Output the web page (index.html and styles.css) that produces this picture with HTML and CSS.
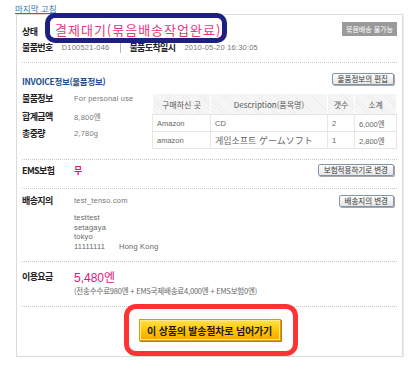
FILE: index.html
```html
<!DOCTYPE html>
<html lang="ko">
<head>
  <meta charset="UTF-8">
  <meta name="viewport" content="width=device-width, initial-scale=1.0">
  <title>물품 상세</title>
  <link rel="stylesheet" href="styles.css">
</head>
<body>
  <a class="edit-link" href="#">마지막 고침</a>
  <div class="panel">
    <div class="section status-section">
      <div class="status-row">
        <span class="label status-label">상태</span>
        <span class="status-text">결제대기(묶음배송작업완료)</span>
        <span class="badge">묶음배송 불가능</span>
      </div>
      <div class="meta-row">
        <span class="label">물품번호</span>
        <span class="value meta-value">D100521-046</span>
        <span class="sep"></span>
        <span class="label">물품도착일시</span>
        <span class="value meta-value">2010-05-20 16:30:05</span>
      </div>
    </div>

    <div class="section invoice-section">
      <div class="invoice-head">
        <span class="invoice-title">INVOICE정보(물품정보)</span>
        <button class="small-btn">물품정보의 편집</button>
      </div>
      <div class="invoice-body">
        <div class="info-list">
          <div class="info-row"><span class="label">물품정보</span><span class="value">For personal use</span></div>
          <div class="info-row"><span class="label">합계금액</span><span class="value">8,800엔</span></div>
          <div class="info-row"><span class="label">총중량</span><span class="value">2,780g</span></div>
        </div>
        <table class="invoice-table">
          <tr>
            <th class="col-shop">구매하신 곳</th>
            <th class="col-desc">Description(품목명)</th>
            <th class="col-qty">갯수</th>
            <th class="col-sum">소계</th>
          </tr>
          <tr>
            <td>Amazon</td>
            <td>CD</td>
            <td>2</td>
            <td>6,000엔</td>
          </tr>
          <tr>
            <td>amazon</td>
            <td class="big-cell">게임소프트 ゲームソフト</td>
            <td>1</td>
            <td>2,800엔</td>
          </tr>
        </table>
      </div>
    </div>

    <div class="section ems-section">
      <div class="field-row">
        <span class="label">EMS보험</span>
        <span class="value pink">무</span>
        <button class="small-btn">보험적용하기로 변경</button>
      </div>
    </div>

    <div class="section address-section">
      <div class="field-row address-row">
        <span class="label">배송지의</span>
        <span class="value">test_tenso.com</span>
        <button class="small-btn">배송지의 변경</button>
      </div>
      <div class="address">
        <div>testtest</div>
        <div>setagaya</div>
        <div>tokyo</div>
        <div>11111111<span class="country">Hong Kong</span></div>
      </div>
    </div>

    <div class="section fee-section">
      <div class="field-row">
        <span class="label">이용요금</span>
        <span class="price">5,480<span class="yen">엔</span></span>
      </div>
      <div class="fee-detail">(전송수수료980엔 + EMS국제배송료4,000엔 + EMS보험0엔)</div>
    </div>

    <div class="section action-section">
      <button class="go-btn">이 상품의 발송절차로 넘어가기</button>
    </div>
  </div>
</body>
</html>
```

FILE: styles.css
```css
body {
  margin: 0;
  font-family: "Noto Sans CJK KR", sans-serif;
  font-size: 9px;
  color: #333;
}

.edit-link {
  display: block;
  width: max-content;
  margin: 3px 0 0 15px;
  line-height: 11px;
  font-size: 8.5px;
  color: #3a6fb0;
}

.panel {
  width: 375px;
  margin-left: 16px;
  padding: 0 5px;
  border: 1px solid #dcdcdc;
  box-shadow: 1px 1px 0 #ececec;
}

.section {
  border-bottom: 1px dotted #c8c8c8;
}

.section:last-child {
  border-bottom: none;
}

.label {
  font-weight: 700;
  font-size: 9px;
  letter-spacing: -0.6px;
  color: #222;
}

.value {
  font-family: "Liberation Sans", "Noto Sans CJK KR", sans-serif;
  font-size: 7.5px;
  color: #777;
  letter-spacing: 0.2px;
}

.pink {
  color: #e5137a;
  font-family: "Noto Sans CJK KR", sans-serif;
  font-weight: 700;
  font-size: 9px;
}

/* status */
.status-section {
  padding: 7px 0 8px;
}

.status-row {
  display: flex;
  align-items: flex-end;
  height: 16px;
}

.status-label {
  line-height: 12px;
  width: 33px;
}

.status-text {
  position: relative;
  font-size: 13px;
  line-height: 16px;
  letter-spacing: 1px;
  color: #e8338a;
}

/* navy frame drawn over the status */
.status-text::before {
  content: "";
  position: absolute;
  left: -10px;
  right: -6px;
  top: -9px;
  bottom: -5px;
  border: 5px solid #1d2080;
  border-radius: 10px;
}

.badge {
  align-self: flex-start;
  margin-left: auto;
  height: 14px;
  line-height: 14px;
  padding: 0 4px;
  background-color: #9a9a9a;
  color: #fff;
  font-size: 7px;
}

.meta-row {
  display: flex;
  align-items: center;
  margin-top: 4px;
  line-height: 12px;
}

.meta-value {
  margin-left: 9px;
}

.sep {
  width: 1px;
  height: 10px;
  background-color: #bbb;
  margin: 0 8px 0 11px;
}

/* invoice */
.invoice-section {
  padding: 10px 0;
}

.invoice-head {
  display: flex;
  justify-content: space-between;
  align-items: flex-start;
  height: 14px;
}

.invoice-title {
  margin-top: 2px;
  line-height: 12px;
  font-weight: 700;
  font-size: 8.5px;
  letter-spacing: -0.3px;
  color: #1d4f91;
}

.small-btn {
  height: 12px;
  padding: 0 5px;
  margin-right: 3px;
  border: 1px solid #8194ae;
  border-radius: 2px;
  background: linear-gradient(#ffffff, #e6e6e6);
  box-shadow: 1px 1px 0 #a8a8a8;
  font-family: "Noto Sans CJK KR", sans-serif;
  font-size: 7.5px;
  line-height: 10px;
  color: #333;
}

.invoice-body {
  display: flex;
  margin-top: 6px;
}

.info-list {
  width: 130px;
  margin-top: -3px;
}

.info-row {
  display: flex;
  align-items: center;
  height: 17.5px;
}

.info-row .label,
.field-row .label {
  width: 52px;
  flex-shrink: 0;
}

.invoice-table {
  width: 245px;
  border-collapse: collapse;
  font-size: 7.5px;
  color: #666;
}

.invoice-table th {
  height: 20px;
  padding: 0;
  font-weight: 400;
  font-size: 8px;
  color: #555;
  border: 1px solid #fff;
  border-bottom-color: #e4e4e4;
  background: repeating-linear-gradient(45deg, #ececec 0 1px, #f8f8f8 1px 3px);
}

.invoice-table td {
  height: 16px;
  padding: 0 4px;
  border: 1px solid #e6e6e6;
  font-family: "Liberation Sans", "Noto Sans CJK KR", sans-serif;
}

.invoice-table td.big-cell {
  font-family: "Noto Sans CJK KR", "Noto Sans CJK JP", sans-serif;
  font-size: 9px;
}

.col-shop { width: 57px; }
.col-desc { width: 116px; }
.col-qty { width: 26px; }

/* ems, address, fee rows */
.field-row {
  display: flex;
  align-items: center;
  height: 14px;
}

.field-row .small-btn {
  margin-left: auto;
}

.ems-section {
  padding: 3px 0 11px;
}

.address-section {
  padding: 5px 0 10px;
}

.address-row {
  height: 13px;
}

.address {
  margin: 6px 0 0 52px;
  font-family: "Liberation Sans", sans-serif;
  font-size: 7.5px;
  line-height: 9.5px;
  color: #666;
  letter-spacing: 0.2px;
}

.country {
  margin-left: 14px;
}

.fee-section {
  padding: 7px 0 10px;
}

.price {
  font-family: "Liberation Sans", sans-serif;
  font-size: 12px;
  color: #e5137a;
}

.yen {
  font-family: "Noto Sans CJK KR", sans-serif;
}

.fee-detail {
  margin: 3px 0 0 52px;
  line-height: 10px;
  font-size: 7.5px;
  color: #666;
  letter-spacing: -0.2px;
}

/* action */
.action-section {
  display: flex;
  justify-content: center;
  padding: 12px 0 15px;
}

.go-btn {
  position: relative;
  width: 142px;
  height: 22px;
  padding: 0;
  border: 1px solid #d99a1a;
  background: linear-gradient(#ffe24a, #ffc400 55%, #f7a800);
  box-shadow: inset 0 0 0 1px #ffea8a, 1px 1px 0 #c47f00;
  font-family: "Noto Sans CJK KR", sans-serif;
  font-weight: 700;
  font-size: 10px;
  color: #1a1a1a;
  letter-spacing: -0.2px;
}

/* red frame drawn over the button */
.go-btn::before {
  content: "";
  position: absolute;
  left: -16px;
  right: -18px;
  top: -16px;
  bottom: -16px;
  border: 5px solid #ff3333;
  border-radius: 12px;
}
```
